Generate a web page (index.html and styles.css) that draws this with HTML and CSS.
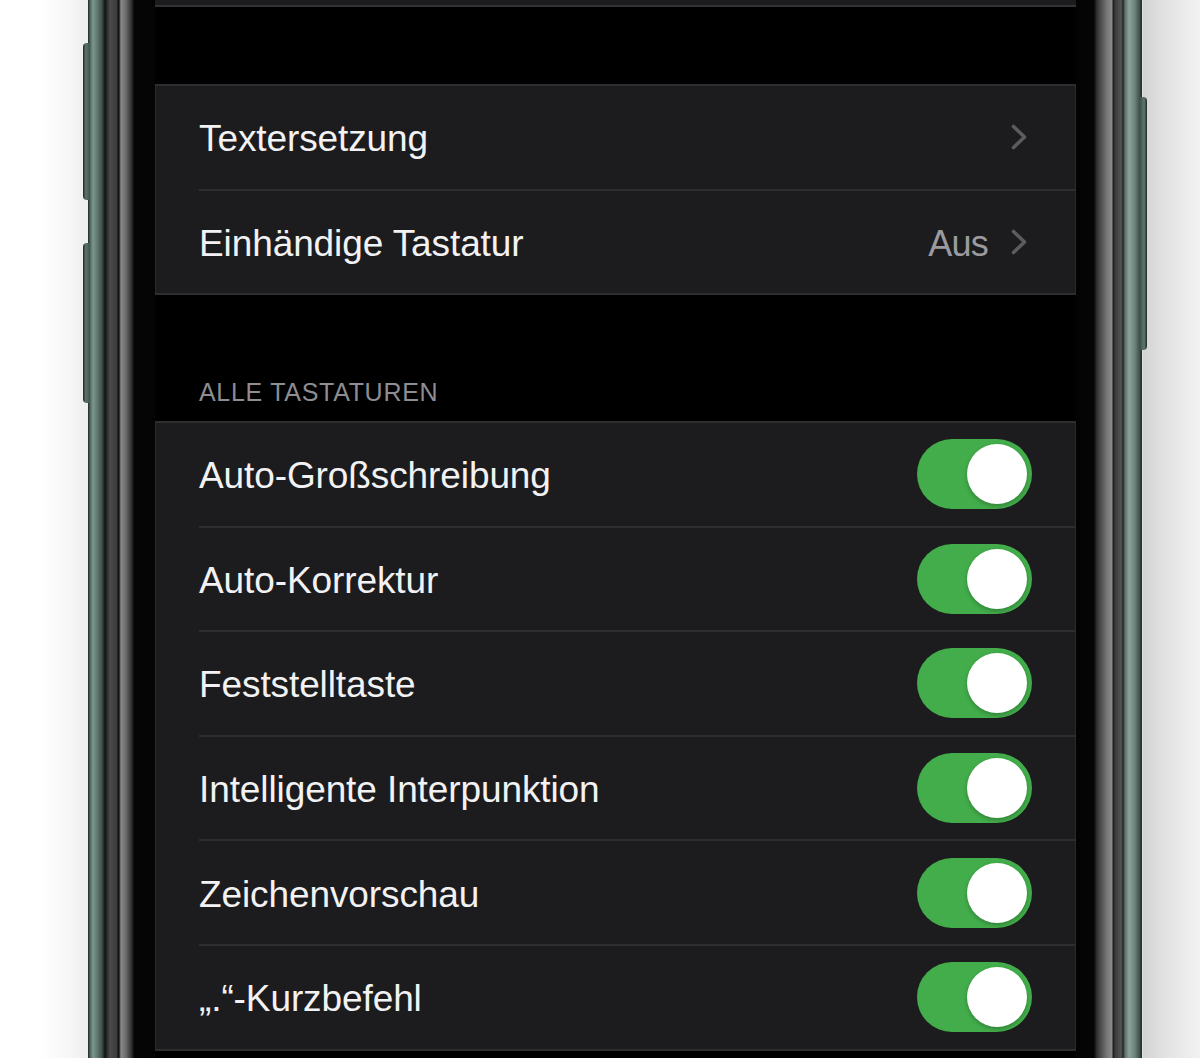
FILE: index.html
```html
<!DOCTYPE html>
<html lang="de">
<head>
<meta charset="utf-8">
<title>Tastaturen</title>
<link rel="stylesheet" href="styles.css">
</head>
<body>
<div class="stage">
  <div class="phone">
    <span class="btn btn-l1"></span>
    <span class="btn btn-l2"></span>
    <span class="btn btn-r"></span>
    <div class="screen">
      <div class="cell-top"></div>
      <div class="gap-top"></div>
      <div class="group">
        <div class="row"><span class="label">Textersetzung</span><span class="acc"><svg class="chev" width="18" height="28" viewBox="0 0 18 28"><polyline points="3.5,3.5 14.5,14 3.5,24.5"/></svg></span></div>
        <div class="row"><span class="label">Einhändige Tastatur</span><span class="acc"><span class="value">Aus</span><svg class="chev" width="18" height="28" viewBox="0 0 18 28"><polyline points="3.5,3.5 14.5,14 3.5,24.5"/></svg></span></div>
      </div>
      <div class="header">ALLE TASTATUREN</div>
      <div class="group group-2">
        <div class="row"><span class="label">Auto-Großschreibung</span><span class="toggle"><span class="knob"></span></span></div>
        <div class="row"><span class="label">Auto-Korrektur</span><span class="toggle"><span class="knob"></span></span></div>
        <div class="row"><span class="label">Feststelltaste</span><span class="toggle"><span class="knob"></span></span></div>
        <div class="row"><span class="label">Intelligente Interpunktion</span><span class="toggle"><span class="knob"></span></span></div>
        <div class="row"><span class="label">Zeichenvorschau</span><span class="toggle"><span class="knob"></span></span></div>
        <div class="row"><span class="label">„.“-Kurzbefehl</span><span class="toggle"><span class="knob"></span></span></div>
      </div>
    </div>
  </div>
</div>
</body>
</html>
```

FILE: styles.css
```css
html, body {
  margin: 0;
  padding: 0;
}
body {
  width: 1200px;
  height: 1058px;
  overflow: hidden;
  background: linear-gradient(to right,
    #ffffff 0px, #ffffff 40px, #f6f6f6 70px, #efefef 83px,
    #efefef 1142px, #d3d3d3 1143px, #e2e2e2 1165px, #f2f2f2 1200px);
  font-family: "Liberation Sans", Arial, sans-serif;
}
.stage {
  display: flex;
  height: 1058px;
}
.phone {
  position: relative;
  margin-left: 88px;
  width: 1054px;
  height: 1058px;
  box-sizing: border-box;
  padding-left: 67px;
  background: linear-gradient(to right,
    #1b2622 0px, #4e655c 2px, #7d968d 5px, #627b72 9px, #3d4e48 14px, #1e2824 16px,
    #111111 17px, #2b2b2b 19px, #4a4a4a 22px, #3c3c3c 29px, #111111 30px, #171717 31px,
    #8a8a8a 33px, #6a6a6a 38px, #2a2a2a 44px, #060606 46px, #040404 67px,
    #030303 988px, #050505 1006px, #333333 1009px, #777777 1019px, #8c8c8c 1024px,
    #1a1a1a 1025px, #3a3a3a 1027px, #555555 1033px, #1e2824 1035px,
    #5a7168 1037px, #8aa299 1041px, #6a8279 1047px, #3a4c46 1052px, #1b2622 1054px);
}
.btn {
  position: absolute;
  width: 7px;
  background: linear-gradient(to right, #1c2824, #5d766d 40%, #3e514a);
}
.btn-l1 { left: -5px; top: 43px; height: 157px; border-radius: 4px 0 0 4px; }
.btn-l2 { left: -5px; top: 243px; height: 160px; border-radius: 4px 0 0 4px; }
.btn-r  { right: -5px; top: 97px; height: 253px; border-radius: 0 4px 4px 0;
  background: linear-gradient(to left, #1c2824, #5d766d 40%, #3e514a); }

.screen {
  width: 921px;
  height: 1058px;
  background: #000;
  overflow: hidden;
}
.cell-top {
  height: 5px;
  background: #1c1c1e;
  border-bottom: 2px solid #333335;
}
.gap-top {
  height: 77px;
}
.group {
  background: #1c1c1e;
  border-top: 2px solid #2e2e30;
  border-bottom: 2px solid #2e2e30;
  box-shadow: inset 1px 0 0 #2a2a2c, inset -1px 0 0 #2a2a2c;
}
.row {
  display: flex;
  align-items: center;
  height: 104.5px;
  box-sizing: border-box;
  margin-left: 44px;
  padding-right: 44px;
  border-bottom: 2px solid #2e2e30;
}
.row:last-child {
  border-bottom: none;
  height: 102.5px;
}
.group-2 .row { height: 104.6px; }
.group-2 .row:last-child { height: 102.6px; }
.label {
  color: #f2f2f4;
  font-size: 37px;
  letter-spacing: -0.1px;
  white-space: nowrap;
  padding-top: 4px;
}
.acc {
  margin-left: auto;
  margin-right: 4px;
  display: flex;
  align-items: center;
  gap: 22px;
}
.value {
  color: #9a9a9f;
  font-size: 36px;
  letter-spacing: -0.8px;
  padding-top: 4px;
}
.chev {
  display: block;
}
.chev polyline {
  fill: none;
  stroke: #5c5c60;
  stroke-width: 3.6;
  stroke-linecap: round;
  stroke-linejoin: round;
}
.header {
  height: 126px;
  box-sizing: border-box;
  padding-left: 44px;
  padding-bottom: 14px;
  display: flex;
  align-items: flex-end;
  color: #8d8d92;
  font-size: 25px;
  line-height: 30px;
  letter-spacing: 0.7px;
}
.toggle {
  margin-left: auto;
  width: 115px;
  height: 70px;
  border-radius: 35px;
  background: #42ad4a;
  display: flex;
  align-items: center;
  justify-content: flex-end;
  padding-right: 5px;
  box-sizing: border-box;
}
.knob {
  width: 60px;
  height: 60px;
  border-radius: 50%;
  background: #ffffff;
  box-shadow: 0 2px 4px rgba(0, 0, 0, 0.25);
}
```
